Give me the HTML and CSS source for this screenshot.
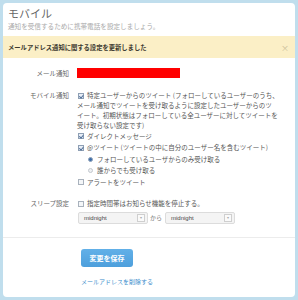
FILE: index.html
```html
<!DOCTYPE html>
<html lang="ja">

<head>
    <meta charset="UTF-8">
    <meta name="viewport" content="width=device-width, initial-scale=1.0">
    <title>モバイル</title>
    <link rel="stylesheet" href="styles.css">
</head>

<body>
    <div class="panel">
        <div class="page-header">
            <h1>モバイル</h1>
            <p class="subtitle">通知を受信するために携帯電話を設定しましょう。</p>
        </div>

        <div class="alert">
            <span>メールアドレス通知に関する設定を更新しました</span>
            <span class="close">&times;</span>
        </div>

        <div class="form">
            <div class="row row-email">
                <div class="label">メール通知</div>
                <div class="control"><span class="redacted"></span></div>
            </div>

            <div class="row row-mobile">
                <div class="label">モバイル通知</div>
                <div class="control">
                    <p class="option long">
                        <span class="cb checked"></span>特定ユーザーからのツイート (フォローしているユーザーのうち、<br>メール通知でツイートを受け取るように設定したユーザーからのツ<br>イート。初期状態はフォローしている全ユーザーに対してツイートを<br>受け取らない設定です)
                    </p>
                    <p class="option"><span class="cb checked"></span>ダイレクトメッセージ</p>
                    <p class="option"><span class="cb checked"></span>@ツイート (ツイートの中に自分のユーザー名を含むツイート)</p>
                    <p class="option sub"><span class="radio checked"></span>フォローしているユーザからのみ受け取る</p>
                    <p class="option sub"><span class="radio"></span>誰からでも受け取る</p>
                    <p class="option"><span class="cb"></span>アラートをツイート</p>
                </div>
            </div>

            <div class="row row-sleep">
                <div class="label">スリープ設定</div>
                <div class="control">
                    <p class="option"><span class="cb"></span>指定時間帯はお知らせ機能を停止する。</p>
                    <div class="time-range">
                        <div class="select"><span>midnight</span><span class="arrow">&#9662;</span></div>
                        <span class="to">から</span>
                        <div class="select"><span>midnight</span><span class="arrow">&#9662;</span></div>
                    </div>
                </div>
            </div>
        </div>

        <div class="actions">
            <button class="btn-save">変更を保存</button>
            <a class="delete-link" href="#">メールアドレスを削除する</a>
        </div>
    </div>
</body>

</html>
```

FILE: styles.css
```css
body {
    margin: 0;
    padding: 3px;
    background-color: #c0deed;
    font-family: "Noto Sans CJK JP", sans-serif;
    color: #555;
}

.panel {
    height: 294px;
    background-color: #fff;
    border-radius: 4px;
    overflow: hidden;
}

.page-header {
    padding: 4px 5px 6px;
}

h1 {
    margin: 0;
    font-size: 11px;
    line-height: 12px;
    font-weight: normal;
    color: #666;
}

.subtitle {
    margin: 3px 0 0;
    font-size: 6.6px;
    line-height: 8px;
    color: #aaa;
}

.alert {
    height: 22px;
    padding: 0 6px 0 5px;
    display: flex;
    align-items: center;
    justify-content: space-between;
    background-color: #fbefc6;
    font-size: 6.3px;
    font-weight: bold;
    color: #3d3a30;
}

.alert .close {
    font-size: 8px;
    font-weight: normal;
    color: #c9bd98;
}

.form {
    padding-bottom: 13px;
    border-bottom: 1px solid #ececec;
}

.row {
    display: grid;
    grid-template-columns: 66px 1fr;
    column-gap: 8px;
    font-size: 6.5px;
    line-height: 10px;
}

.row-email {
    margin-top: 10px;
}

.row-mobile {
    margin-top: 12px;
}

.row-sleep {
    margin-top: 10px;
}

.label {
    text-align: right;
    color: #666;
    white-space: nowrap;
}

.redacted {
    display: block;
    width: 103px;
    height: 10px;
    background-color: #f00;
}

.option {
    margin: 0;
    line-height: 11.5px;
    white-space: nowrap;
    color: #555;
}

.option.long {
    line-height: 10px;
    margin-bottom: 0.75px;
}

.row-sleep .option {
    line-height: 10px;
}

.option.sub {
    padding-left: 11px;
}

.cb {
    display: inline-block;
    box-sizing: border-box;
    width: 6px;
    height: 6px;
    margin: 0 3px 0 1px;
    vertical-align: -0.5px;
    border: 1px solid #a9b2bd;
    background-color: #f4f6f8;
}

.cb.checked {
    border-color: #8e9fb4;
    background-color: #e8eef6;
    position: relative;
}

.cb.checked::after {
    content: "";
    position: absolute;
    left: 1px;
    top: 0;
    width: 1.5px;
    height: 2.5px;
    border: solid #4a6a96;
    border-width: 0 1px 1px 0;
    transform: rotate(40deg);
}

.radio {
    display: inline-block;
    box-sizing: border-box;
    width: 5px;
    height: 5px;
    margin-right: 4px;
    vertical-align: 0;
    border: 1px solid #c3c8ce;
    border-radius: 50%;
    background-color: #eef0f2;
}

.radio.checked {
    border-color: #8fa3bb;
    background-color: #3f6ea8;
}

.time-range {
    margin-top: 4px;
    display: flex;
    align-items: center;
    margin-left: 1px;
}

.select {
    box-sizing: border-box;
    width: 70px;
    height: 12px;
    padding: 0 2px 0 5px;
    display: flex;
    align-items: center;
    justify-content: space-between;
    background-color: #f4f4f4;
    border: 1px solid #dcdcdc;
    border-radius: 2px;
    font-family: "Liberation Sans", Arial, sans-serif;
    font-size: 6px;
    color: #444;
}

.select .arrow {
    box-sizing: border-box;
    width: 8px;
    height: 8px;
    display: flex;
    align-items: center;
    justify-content: center;
    border: 1px solid #cfcfcf;
    background-color: #fafafa;
    font-size: 4px;
    color: #aaa;
}

.to {
    margin: 0 3px 0 2px;
    font-size: 6px;
    color: #777;
}

.actions {
    padding: 11px 0 0 78px;
    display: flex;
    flex-direction: column;
    align-items: flex-start;
}

.btn-save {
    width: 52px;
    height: 18px;
    padding: 0;
    border: none;
    border-radius: 3px;
    background: linear-gradient(#62b0e8, #4d9fdc);
    font-family: "Noto Sans CJK JP", sans-serif;
    font-size: 7px;
    font-weight: bold;
    color: #fff;
}

.delete-link {
    margin-top: 10px;
    font-size: 6px;
    line-height: 10px;
    color: #3b8dcc;
    text-decoration: none;
}
```
